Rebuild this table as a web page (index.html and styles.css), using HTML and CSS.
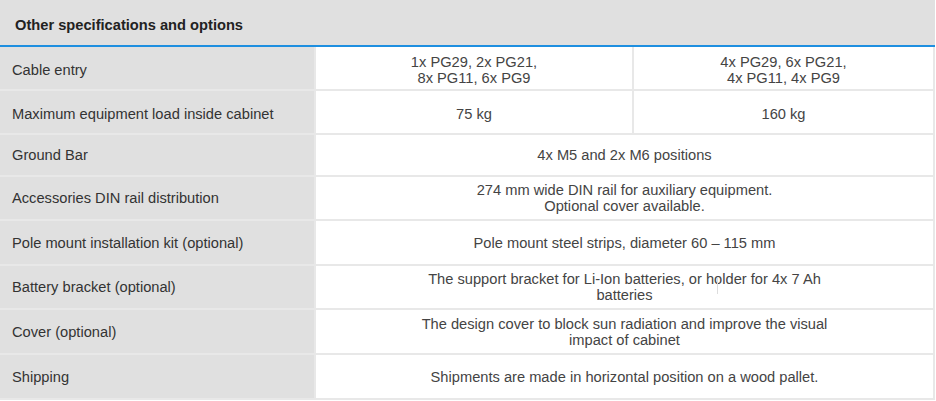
FILE: index.html
```html
<!DOCTYPE html>
<html>
<head>
<meta charset="utf-8">
<link rel="stylesheet" href="styles.css">
</head>
<body>
<div class="spec">
  <div class="head">Other specifications and options</div>
  <div class="row low">
    <div class="label">Cable entry</div>
    <div class="val">1x PG29, 2x PG21,<br>8x PG11, 6x PG9</div>
    <div class="val">4x PG29, 6x PG21,<br>4x PG11, 4x PG9</div>
  </div>
  <div class="row low">
    <div class="label">Maximum equipment load inside cabinet</div>
    <div class="val">75 kg</div>
    <div class="val">160 kg</div>
  </div>
  <div class="row short">
    <div class="label">Ground Bar</div>
    <div class="val span">4x M5 and 2x M6 positions</div>
  </div>
  <div class="row">
    <div class="label">Accessories DIN rail distribution</div>
    <div class="val span">274 mm wide DIN rail for auxiliary equipment.<br>Optional cover available.</div>
  </div>
  <div class="row tall">
    <div class="label">Pole mount installation kit (optional)</div>
    <div class="val span">Pole mount steel strips, diameter 60 – 115 mm</div>
  </div>
  <div class="row">
    <div class="label">Battery bracket (optional)</div>
    <div class="val span">The support bracket for Li-Ion batteries, or holder for 4x 7 Ah<br>batteries<span class="cursor"></span></div>
  </div>
  <div class="row tall">
    <div class="label">Cover (optional)</div>
    <div class="val span">The design cover to block sun radiation and improve the visual<br>impact of cabinet</div>
  </div>
  <div class="row tall">
    <div class="label">Shipping</div>
    <div class="val span">Shipments are made in horizontal position on a wood pallet.</div>
  </div>
</div>
</body>
</html>
```
FILE: styles.css
```css
html, body {
  margin: 0;
  padding: 0;
  background: #ffffff;
}
body {
  font-family: "Liberation Sans", Arial, sans-serif;
  font-size: 14.67px;
  color: #333333;
}
.spec {
  width: 935px;
}
.head {
  box-sizing: border-box;
  background: #e0e0e0;
  border-bottom: 2px solid #1e8fe0;
  height: 47px;
  display: flex;
  align-items: center;
  padding-left: 15px;
  padding-top: 5px;
  font-weight: bold;
  color: #222;
}
.row {
  display: grid;
  grid-template-columns: 314px 316px 299px;
  column-gap: 2px;
  padding-right: 2px;
  background: #e8e8e8;
  border-bottom: 2px solid #e8e8e8;
  height: 42px;
}
.row.short { height: 40px; }
.row.tall { height: 43px; }
.label {
  background: #e0e0e0;
  display: flex;
  align-items: center;
  padding-left: 12px;
  color: #333;
}
.val {
  background: #ffffff;
  display: flex;
  align-items: center;
  justify-content: center;
  text-align: center;
  line-height: 16px;
  color: #444;
  position: relative;
}
.row.low .label,
.row.low .val {
  padding-top: 3px;
}
.val.span {
  grid-column: 2 / 4;
}
.cursor {
  position: absolute;
  left: 401px;
  top: 12px;
  width: 1px;
  height: 16px;
  background: #dddddd;
}
```
